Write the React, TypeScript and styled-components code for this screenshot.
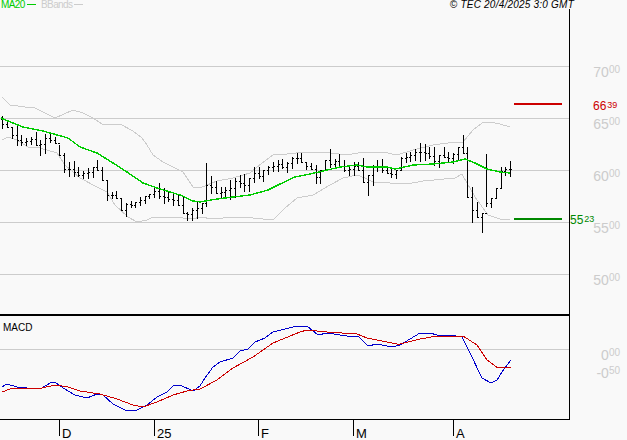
import React from 'react'
import styled, { createGlobalStyle } from 'styled-components'

type Point = [number, number]

// high y, low y for each session, in page pixels
const bars: Point[] = [
  [116, 128], [121, 127], [127, 138], [125, 145], [135, 145], [138, 145], [137, 144], [132, 145],
  [140, 155], [134, 153], [134, 142], [137, 143], [145, 155], [153, 172], [162, 176], [161, 176],
  [167, 176], [171, 178], [168, 178], [167, 177], [160, 170], [167, 180], [180, 200], [192, 198],
  [191, 198], [198, 210], [203, 216], [201, 207], [202, 207], [197, 205], [196, 203], [194, 198],
  [188, 197], [183, 198], [188, 203], [192, 201], [192, 205], [195, 205], [197, 213], [212, 220],
  [208, 220], [202, 218], [203, 213], [163, 206], [176, 193], [181, 193], [187, 198], [187, 197],
  [180, 199], [178, 197], [175, 187], [174, 191], [178, 191], [167, 182], [167, 178], [170, 181],
  [166, 174], [162, 171], [160, 171], [159, 168], [162, 172], [157, 168], [153, 163], [153, 162],
  [162, 169], [163, 169], [165, 183], [170, 183], [160, 170], [149, 167], [159, 168], [154, 167],
  [160, 171], [165, 175], [162, 175], [162, 170], [158, 182], [175, 195], [165, 185], [160, 171],
  [159, 172], [166, 173], [169, 177], [170, 178], [157, 170], [153, 162], [152, 161], [149, 160],
  [143, 161], [144, 160], [147, 158], [147, 165], [155, 167], [147, 157], [152, 162], [153, 163],
  [147, 160], [135, 153], [147, 197], [187, 222], [202, 217], [213, 232], [154, 206], [198, 207],
  [188, 197], [167, 188], [167, 175], [161, 176],
]

const ma20: Point[] = [
  [1, 118], [3, 119], [23, 127], [43, 131], [68, 138], [80, 147], [97, 153], [113, 163], [127, 172],
  [143, 183], [157, 188], [180, 195], [193, 201], [200, 202], [217, 199], [233, 197], [250, 195],
  [268, 190], [280, 184], [295, 177], [310, 174], [323, 171], [340, 167], [357, 165], [367, 167],
  [387, 167], [395, 169], [400, 168], [413, 165], [433, 164], [453, 162], [465, 159], [475, 163],
  [487, 169], [500, 172], [510, 173],
]

const upperBand: Point[] = [
  [2, 97], [10, 105], [25, 107], [35, 108], [55, 118], [73, 110], [83, 113], [93, 118], [102, 124],
  [120, 124], [133, 131], [142, 138], [147, 145], [153, 155], [163, 162], [183, 172], [193, 187],
  [200, 188], [207, 185], [217, 181], [233, 178], [250, 173], [262, 163], [273, 155], [287, 154],
  [305, 152], [323, 152], [347, 155], [363, 152], [383, 152], [397, 155], [413, 150], [433, 145],
  [455, 142], [463, 142], [473, 130], [482, 123], [490, 122], [500, 124], [510, 127],
]

const lowerBand: Point[] = [
  [2, 140], [8, 137], [17, 140], [28, 147], [40, 148], [57, 153], [65, 165], [80, 178], [97, 187],
  [107, 192], [115, 205], [128, 217], [137, 222], [147, 220], [153, 217], [173, 217], [193, 219],
  [200, 217], [213, 219], [233, 217], [253, 218], [273, 220], [285, 208], [297, 198], [313, 195],
  [330, 185], [343, 178], [357, 175], [365, 178], [373, 182], [390, 183], [407, 184], [423, 181],
  [455, 178], [462, 174], [467, 183], [475, 197], [488, 215], [500, 219], [510, 220],
]

const macd: Point[] = [
  [2, 387], [7, 384], [17, 387], [27, 388], [42, 388], [50, 383], [55, 382], [63, 388], [75, 395],
  [87, 398], [97, 394], [103, 395], [113, 404], [127, 411], [137, 410], [147, 405], [157, 397],
  [167, 392], [173, 386], [180, 385], [193, 391], [200, 386], [205, 378], [213, 367], [220, 362],
  [233, 358], [240, 351], [248, 349], [255, 342], [265, 338], [273, 332], [293, 327], [307, 326],
  [318, 335], [327, 333], [347, 336], [358, 336], [368, 346], [377, 344], [392, 347], [400, 345],
  [420, 333], [430, 333], [437, 335], [450, 335], [462, 337], [470, 353], [482, 378], [491, 383],
  [497, 380], [502, 372], [511, 360],
]

const signal: Point[] = [
  [2, 392], [10, 389], [42, 388], [55, 385], [68, 387], [80, 391], [100, 394], [117, 399], [133, 405],
  [143, 407], [157, 402], [173, 395], [187, 391], [200, 389], [217, 380], [233, 368], [253, 357],
  [273, 343], [300, 332], [307, 330], [327, 332], [357, 334], [367, 338], [397, 344], [400, 344],
  [420, 339], [437, 336], [463, 336], [477, 345], [487, 360], [498, 368], [511, 367],
]

const priceGrid = [66, 118, 170, 222, 274]
const priceLabels = [['70', '00'], ['65', '00'], ['60', '00'], ['55', '00'], ['50', '00']]
const macdLabels = [['0', '00'], ['-0', '50']]
const months = [
  { label: 'D', width: 95 },
  { label: '25', width: 104 },
  { label: 'F', width: 95 },
  { label: 'M', width: 100 },
  { label: 'A', width: 60 },
]

const toPoints = (line: Point[]) => line.map(([x, y]) => `${x},${y}`).join(' ')

const barPath = () => {
  let open = bars[0][0] + 3
  return bars
    .map(([high, low], i) => {
      const x = Math.round(2.4 + i * 4.745) + 0.5
      const next = bars[i + 1] ?? [high, low]
      const close = Math.min(low, Math.max(high, Math.round((next[0] + next[1]) / 2)))
      const d = `M${x} ${high}V${low + 1}M${x - 1.5} ${open + 0.5}H${x}M${x} ${close + 0.5}H${x + 1.5}`
      open = close
      return d
    })
    .join('')
}

const GlobalStyle = createGlobalStyle`
  html, body {
    margin: 0;
    padding: 0;
    background: #f9f9f9;
  }
`

const Page = styled.div`
  width: 627px;
  height: 440px;
  overflow: hidden;
  background: #f9f9f9;
  font-family: 'Liberation Sans', Arial, sans-serif;
`

const Header = styled.div`
  display: flex;
  justify-content: space-between;
  width: 574px;
  height: 9px;
  font-size: 10px;
  line-height: 9px;
  white-space: nowrap;
`

const Legend = styled.div`
  display: flex;
  padding-left: 1px;
  letter-spacing: -0.6px;
`

const LegendItem = styled.div<{ $color: string; $width: number }>`
  display: flex;
  align-items: center;
  width: ${({ $width }) => $width}px;
  color: ${({ $color }) => $color};

  &::after {
    content: '';
    width: 9px;
    height: 1px;
    margin-left: 2px;
    background: ${({ $color }) => $color};
  }
`

const Copyright = styled.div`
  font-style: italic;
  letter-spacing: 0.22px;
  color: #000;
`

const PanelRow = styled.div<{ $height: number }>`
  display: flex;
  height: ${({ $height }) => $height}px;
`

const PricePlot = styled.div`
  box-sizing: border-box;
  width: 570px;
  border-right: 1px solid #000;
  border-bottom: 2px solid #000;
`

const MacdPlot = styled.div`
  position: relative;
  box-sizing: border-box;
  width: 570px;
  border-right: 1px solid #000;
  border-bottom: 1px solid #000;
`

const ChartSvg = styled.svg`
  display: block;
`

const Axis = styled.div<{ $top: number }>`
  position: relative;
  flex: 1;
  padding: ${({ $top }) => $top}px 7px 0 0;
`

const AxisTick = styled.div<{ $height: number }>`
  display: flex;
  justify-content: flex-end;
  height: ${({ $height }) => $height}px;
  color: #ccc;
  font-size: 14px;
  line-height: 14px;
`

const Small = styled.span`
  font-size: 10px;
  line-height: 10px;
`

const LevelLabel = styled.div<{ $color: string; $left: number; $top: number }>`
  position: absolute;
  left: ${({ $left }) => $left}px;
  top: ${({ $top }) => $top}px;
  display: flex;
  color: ${({ $color }) => $color};
  font-size: 12px;
  line-height: 12px;

  ${Small} {
    font-size: 9px;
    margin-left: 1px;
  }
`

const MacdTitle = styled.div`
  position: absolute;
  left: 3px;
  top: 6px;
  color: #000;
  font-size: 10px;
  line-height: 11px;
`

const TimeAxis = styled.div`
  display: flex;
  padding-left: 59px;
`

const Month = styled.div<{ $width: number }>`
  display: flex;
  width: ${({ $width }) => $width}px;
  color: #000;
  font-size: 13px;
  line-height: 13px;

  &::before {
    content: '';
    width: 1px;
    height: 16px;
    margin-right: 2px;
    background: #000;
  }

  span {
    padding-top: 7px;
  }
`

export default function App() {
  return (
    <Page>
      <GlobalStyle />
      <Header>
        <Legend>
          <LegendItem $color="#00cc00" $width={40}>MA20</LegendItem>
          <LegendItem $color="#cccccc" $width={50}>BBands</LegendItem>
        </Legend>
        <Copyright>© TEC 20/4/2025 3:0 GMT</Copyright>
      </Header>

      <PanelRow $height={307}>
        <PricePlot>
          <ChartSvg width={569} height={305} viewBox="0 9 569 305" shapeRendering="crispEdges" fill="none">
            {priceGrid.map((y) => (
              <line key={y} x1={0} x2={569} y1={y + 0.5} y2={y + 0.5} stroke="#cccccc" />
            ))}
            <polyline points={toPoints(upperBand)} stroke="#cccccc" />
            <polyline points={toPoints(lowerBand)} stroke="#cccccc" />
            <path d={barPath()} stroke="#000" />
            <polyline points={toPoints(ma20)} stroke="#00cc00" strokeWidth={1.4} />
            <rect x={514} y={103} width={48} height={2} fill="#cc0000" />
            <rect x={514} y={218} width={48} height={2} fill="#008800" />
          </ChartSvg>
        </PricePlot>
        <Axis $top={56}>
          {priceLabels.map(([big, small]) => (
            <AxisTick key={big} $height={52}>
              {big}
              <Small>{small}</Small>
            </AxisTick>
          ))}
          <LevelLabel $color="#cc0000" $left={23} $top={91}>
            66<Small>39</Small>
          </LevelLabel>
          <LevelLabel $color="#008800" $left={0} $top={205}>
            55<Small>23</Small>
          </LevelLabel>
        </Axis>
      </PanelRow>

      <PanelRow $height={104}>
        <MacdPlot>
          <MacdTitle>MACD</MacdTitle>
          <ChartSvg width={569} height={103} viewBox="0 316 569 103" shapeRendering="crispEdges" fill="none">
            <line x1={0} x2={569} y1={349.5} y2={349.5} stroke="#cccccc" />
            <polyline points={toPoints(macd)} stroke="#0000cc" />
            <polyline points={toPoints(signal)} stroke="#cc0000" />
          </ChartSvg>
        </MacdPlot>
        <Axis $top={32}>
          {macdLabels.map(([big, small]) => (
            <AxisTick key={big} $height={18}>
              {big}
              <Small>{small}</Small>
            </AxisTick>
          ))}
        </Axis>
      </PanelRow>

      <TimeAxis>
        {months.map((m) => (
          <Month key={m.label} $width={m.width}>
            <span>{m.label}</span>
          </Month>
        ))}
      </TimeAxis>
    </Page>
  )
}
